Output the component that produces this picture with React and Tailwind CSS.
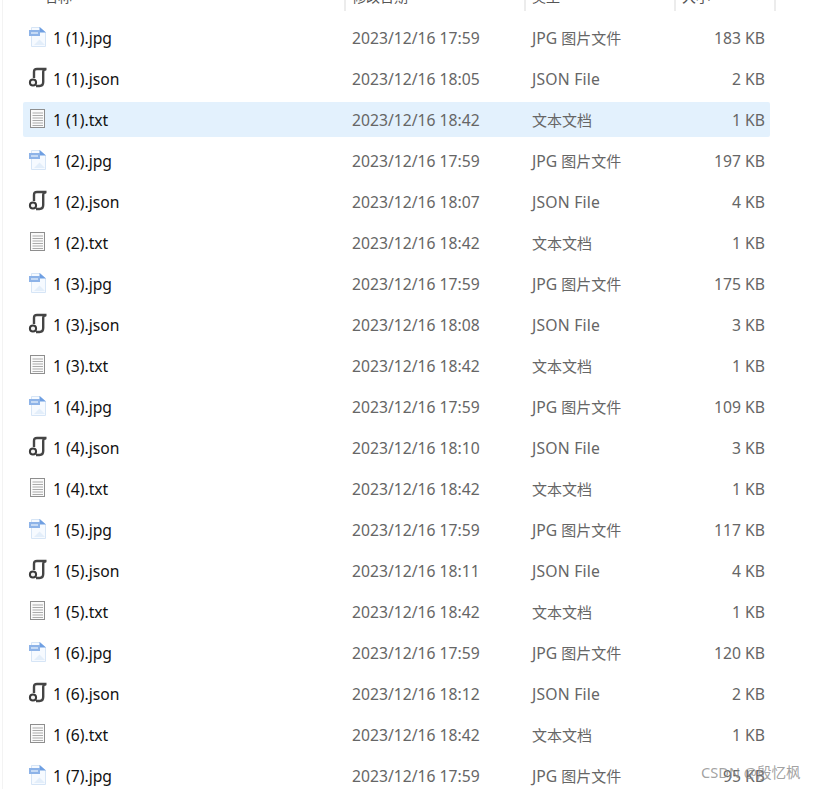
const rows = [
  ["1 (1).jpg", "17:59", "j", "183 KB"],
  ["1 (1).json", "18:05", "s", "2 KB"],
  ["1 (1).txt", "18:42", "t", "1 KB", true],
  ["1 (2).jpg", "17:59", "j", "197 KB"],
  ["1 (2).json", "18:07", "s", "4 KB"],
  ["1 (2).txt", "18:42", "t", "1 KB"],
  ["1 (3).jpg", "17:59", "j", "175 KB"],
  ["1 (3).json", "18:08", "s", "3 KB"],
  ["1 (3).txt", "18:42", "t", "1 KB"],
  ["1 (4).jpg", "17:59", "j", "109 KB"],
  ["1 (4).json", "18:10", "s", "3 KB"],
  ["1 (4).txt", "18:42", "t", "1 KB"],
  ["1 (5).jpg", "17:59", "j", "117 KB"],
  ["1 (5).json", "18:11", "s", "4 KB"],
  ["1 (5).txt", "18:42", "t", "1 KB"],
  ["1 (6).jpg", "17:59", "j", "120 KB"],
  ["1 (6).json", "18:12", "s", "2 KB"],
  ["1 (6).txt", "18:42", "t", "1 KB"],
  ["1 (7).jpg", "17:59", "j", "95 KB"],
];

function Type({ kind }) {
  if (kind === "s") return <span className="tracking-[0.2px]">JSON File</span>;
  if (kind === "j")
    return (
      <span>
        JPG <span className="text-[15px]">图片文件</span>
      </span>
    );
  return <span className="text-[15px]">文本文档</span>;
}

function Icon({ kind }) {
  if (kind === "j")
    return (
      <svg width="19" height="22" viewBox="0 0 19 22" className="mb-[3px] shrink-0">
        <path d="M3.5 1.5H12L17.5 6.5V20.5H3.5Z" fill="#f6faff" stroke="#d6e5f6" />
        <path d="M11.5 1L18 6.5H11.5Z" fill="#6f9fe2" />
        <path d="M6 19L11.5 13.5L17 19Z" fill="#e3eefa" />
        <rect x="1" y="4" width="11" height="6" fill="#8db3e8" />
        <rect x="3" y="6" width="7" height="2" fill="#c6daf4" />
      </svg>
    );
  if (kind === "s")
    return (
      <svg width="19" height="22" viewBox="0 0 19 22" className="mb-[3px] shrink-0" fill="none">
        <path d="M6 11V5C6 3 7 2 9 2H18.5" stroke="#454545" strokeWidth="2.4" />
        <path d="M18 2.2C16 2.2 15.2 3.5 15.2 5V15C15.2 17.8 14 19 11.5 19H8" stroke="#454545" strokeWidth="2.4" />
        <circle cx="5" cy="15.5" r="3.1" stroke="#3a3a3a" strokeWidth="2" fill="#f2f2f2" />
      </svg>
    );
  return (
    <svg width="19" height="22" viewBox="0 0 19 22" className="mb-[3px] shrink-0">
      <rect x="2.5" y="1.5" width="14" height="18" fill="#fafafa" stroke="#8e8e8e" />
      <path d="M4.5 5H15M4.5 7.5H15M4.5 10H15M4.5 12.5H15M4.5 15H15M4.5 17.5H15" stroke="#ababab" strokeWidth="1" />
    </svg>
  );
}

export default function App() {
  return (
    <div
      className="relative h-[789px] w-[816px] overflow-hidden bg-white text-[15.7px]"
      style={{ fontFamily: '"Noto Sans", "Noto Sans CJK SC", sans-serif' }}
    >
      <div className="ml-[2px] h-[789px] w-[774px] border-l border-[#f3f3f3]">
        <div className="flex h-[11px] overflow-hidden pl-[41px] text-[14px] leading-[11px] text-[#555]">
          <div className="-mt-[9px] w-[300px] shrink-0">名称</div>
          <div className="-mt-[9px] w-[180px] shrink-0 border-l-2 border-[#ececec] pl-[6px]">修改日期</div>
          <div className="-mt-[9px] w-[150px] shrink-0 border-l-2 border-[#ececec] pl-[6px]">类型</div>
          <div className="-mt-[9px] w-[102px] shrink-0 border-r-2 border-l-2 border-[#ececec] pl-[6px]">大小</div>
        </div>
        <div className="mt-[9px] flex flex-col gap-[6px] pl-[20px]">
          {rows.map(([name, time, kind, size, active]) => (
            <div
              key={name}
              className={`flex h-[35px] w-[747px] shrink-0 items-center rounded-[2px] pt-[2px] leading-none ${active ? "bg-[#e3f1fd]" : ""}`}
            >
              <div className="flex w-[329px] items-center gap-[6px] pl-[5px] text-[#111]">
                <Icon kind={kind} />
                <span>{name}</span>
              </div>
              <div className="w-[180px] text-[#666]">2023/12/16 {time}</div>
              <div className="w-[150px] text-[#666]">
                <Type kind={kind} />
              </div>
              <div className="w-[83px] text-right text-[#666]">{size}</div>
            </div>
          ))}
        </div>
      </div>
      <div className="absolute top-[763px] left-[701px] text-[14.6px] leading-[18px] text-[#8a8a8a]/80">CSDN @殷忆枫</div>
    </div>
  );
}
